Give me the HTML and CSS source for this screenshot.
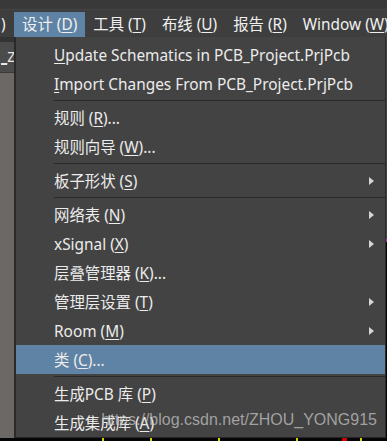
FILE: index.html
```html
<!DOCTYPE html>
<html>
<head>
<meta charset="utf-8">
<link rel="stylesheet" href="styles.css">
</head>
<body>
<div class="screen">
  <div class="menubar">
    <div class="mb-item mb-clip">)</div>
    <div class="mb-item active">设计 (<u>D</u>)</div>
    <div class="mb-item">工具 (<u>T</u>)</div>
    <div class="mb-item">布线 (<u>U</u>)</div>
    <div class="mb-item">报告 (<u>R</u>)</div>
    <div class="mb-item">Window (<u>W</u>)</div>
  </div>
  <div class="main">
    <div class="leftstrip">
      <div class="ls-top"></div>
      <div class="ls-tab"><u>_</u>Z'</div>
    </div>
    <div class="menu">
      <div class="item"><span><u>U</u>pdate Schematics in PCB_Project.PrjPcb</span></div>
      <div class="item"><span><u>I</u>mport Changes From PCB_Project.PrjPcb</span></div>
      <div class="sep"></div>
      <div class="item"><span>规则 (<u>R</u>)...</span></div>
      <div class="item"><span>规则向导 (<u>W</u>)...</span></div>
      <div class="sep"></div>
      <div class="item sub"><span>板子形状 (<u>S</u>)</span><i class="arrow"></i></div>
      <div class="sep"></div>
      <div class="item sub"><span>网络表 (<u>N</u>)</span><i class="arrow"></i></div>
      <div class="item sub"><span>xSignal (<u>X</u>)</span><i class="arrow"></i></div>
      <div class="item"><span>层叠管理器 (<u>K</u>)...</span></div>
      <div class="item sub"><span>管理层设置 (<u>T</u>)</span><i class="arrow"></i></div>
      <div class="item sub"><span>Room (<u>M</u>)</span><i class="arrow"></i></div>
      <div class="item hl"><span>类 (<u>C</u>)...</span></div>
      <div class="sep"></div>
      <div class="item"><span>生成PCB 库 (<u>P</u>)</span></div>
      <div class="item"><span>生成集成库 (<u>A</u>)</span></div>
    </div>
    <div class="rightedge">
      <div class="re-grey"></div>
      <div class="re-mag"></div>
    </div>
  </div>
  <div class="watermark">https://blog.csdn.net/ZHOU_YONG915</div>
  <div class="dots">
    <i class="d y" style="left:102px"></i>
    <i class="d y" style="left:150px"></i>
    <i class="d y" style="left:218px"></i>
    <i class="d y" style="left:296px"></i>
    <i class="d r" style="left:342px"></i>
    <i class="d y" style="left:360px"></i>
  </div>
</div>
</body>
</html>
```

FILE: styles.css
```css
* { box-sizing: border-box; }
html, body { margin: 0; padding: 0; }
body {
  width: 387px;
  height: 441px;
  overflow: hidden;
  background: #0a0a0a;
  font-family: "Noto Sans", "Noto Sans CJK SC", sans-serif;
  font-size: 15.4px;
  color: #ececec;
}
.screen {
  position: relative;
  width: 387px;
  height: 441px;
  background: #050505;
}
u { text-decoration: underline; text-underline-offset: 2px; text-decoration-thickness: 1px; }

.menubar {
  height: 37px;
  display: flex;
  align-items: flex-end;
  background: linear-gradient(#393939 0, #393939 9px, #444 9px, #444 10px, #3e3e3e 10px);
  white-space: nowrap;
  overflow: hidden;
}
.mb-item {
  height: 25px;
  line-height: 24px;
  padding: 1px 8px 0;
  color: #f0f0f0;
  flex: none;
}
.mb-clip { width: 14px; padding: 1px 0 0 1px; }
.mb-item.active { background: #5f83a4; }

.main {
  display: flex;
  height: 401px;
}
.leftstrip {
  width: 14px;
  flex: none;
  background: #6b6866;
  display: flex;
  flex-direction: column;
  overflow: hidden;
}
.ls-top { height: 5px; background: #333; }
.ls-tab {
  height: 31px;
  background: #4b4b4b;
  border-bottom: 1px solid #3a3a3a;
  font-size: 14px;
  line-height: 30px;
  padding-left: 1px;
  white-space: nowrap;
  overflow: hidden;
  color: #e8e8e8;
}
.menu {
  width: 372px;
  flex: none;
  height: 401px;
  background: #434343;
  border-left: 2px solid #2a2a2a;
  border-right: 1px solid #2a2a2a;
  border-bottom: 1px solid #262626;
  padding-top: 3px;
  align-self: flex-start;
}
.item {
  height: 29px;
  display: flex;
  align-items: center;
  justify-content: space-between;
  padding: 0 11px 0 38px;
  white-space: nowrap;
  color: #ececec;
}
.item span { line-height: 20px; padding-top: 2px; }
.item.hl { background: #5f83a4; }
.arrow {
  width: 0;
  height: 0;
  border-top: 4.5px solid transparent;
  border-bottom: 4.5px solid transparent;
  border-left: 5px solid #d6d6d6;
}
.sep {
  height: 5px;
  margin-left: 38px;
  display: flex;
  align-items: center;
}
.sep::before {
  content: "";
  display: block;
  width: 100%;
  height: 1px;
  background: #2a2a2a;
}
.rightedge {
  width: 1px;
  flex: none;
  display: flex;
  flex-direction: column;
}
.re-grey { height: 202px; background: #444; }
.re-mag { height: 3px; background: #d41ad4; }

.watermark {
  position: absolute;
  right: 10px;
  top: 410px;
  font-family: "Liberation Sans", Arial, sans-serif;
  font-size: 16px;
  color: rgba(200, 200, 200, 0.72);
  white-space: nowrap;
  line-height: 20px;
}
.dots { position: absolute; left: 0; top: 438px; width: 387px; height: 3px; }
.d { position: absolute; top: 0; width: 2px; height: 3px; }
.d.y { background: #d8d800; }
.d.r { background: #d00000; width: 5px; }
```
